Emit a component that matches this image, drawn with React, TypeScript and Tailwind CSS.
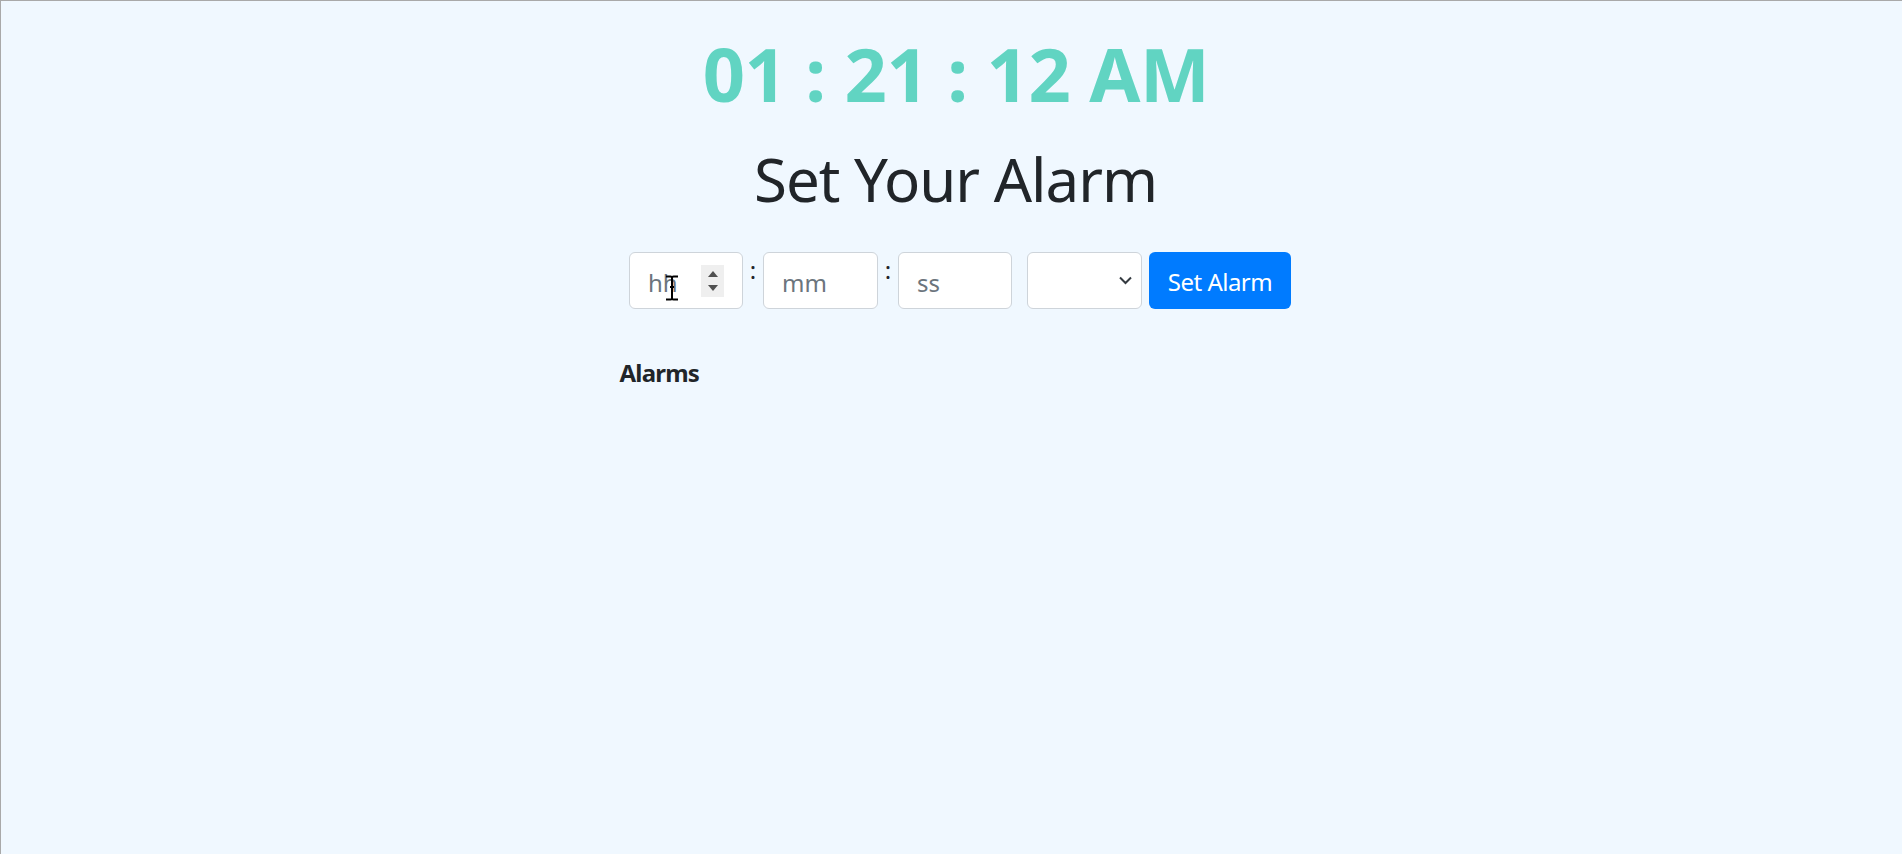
import React from "react";

function Colon() {
  return (
    <span className="w-[20px] self-start text-center text-[24px] leading-[36px] text-[#212529]">:</span>
  );
}

const inputCls =
  "h-[57px] rounded-[6px] border border-[#ced4da] bg-white px-[18px] pt-[4px] text-[24px] leading-[36px] placeholder:text-[#6c757d] outline-none";

export default function App() {
  const font = { fontFamily: '"Noto Sans", "Open Sans", sans-serif' };
  return (
    <div
      className="min-h-screen w-full bg-[#f0f8ff] border-t border-l border-[#a9a9a9] text-[#212529]"
      style={font}
    >
      <div className="pt-[29px] pl-[9px] text-center text-[74px] font-bold leading-[1.2] text-[#61d4c2] tracking-[-0.4px]">
        01 : 21 : 12 AM
      </div>
      <h1 className="mt-[24px] pl-[8px] text-center text-[60px] font-normal leading-[1.2] tracking-[-1px] text-[#212529]">
        Set Your Alarm
      </h1>
      <div className="mt-[37px] flex justify-center pl-[17px]">
        <div className="relative h-[57px] w-[114px]">
          <input type="text" placeholder="hh" className={`${inputCls} w-[114px]`} style={font} />
          <div className="absolute left-[72px] top-[13px] flex h-[32px] w-[23px] flex-col items-center justify-center gap-[8px] bg-[#efefef]">
            <svg width="10" height="6" viewBox="0 0 10 6"><path d="M5 0 L10 6 L0 6 Z" fill="#505050" /></svg>
            <svg width="10" height="6" viewBox="0 0 10 6"><path d="M0 0 L10 0 L5 6 Z" fill="#505050" /></svg>
          </div>
          <svg className="absolute left-[36px] top-[23px]" width="14" height="26" viewBox="0 0 14 26">
            <path d="M1 1.5 H5.5 M8.5 1.5 H13 M7 2 V24 M1 24.5 H5.5 M8.5 24.5 H13 M5.5 1.5 Q7 1.5 7 3 M8.5 1.5 Q7 1.5 7 3 M5.5 24.5 Q7 24.5 7 23 M8.5 24.5 Q7 24.5 7 23 M5 12 H9" stroke="#000" strokeWidth="2" fill="none" />
          </svg>
        </div>
        <Colon />
        <input type="text" placeholder="mm" className={`${inputCls} w-[115px]`} style={font} />
        <Colon />
        <input type="text" placeholder="ss" className={`${inputCls} w-[114px]`} style={font} />
        <div className="ml-[15px] relative h-[57px] w-[115px] rounded-[6px] border border-[#ced4da] bg-white">
          <svg className="absolute right-[9px] top-[23px]" width="13" height="9" viewBox="0 0 13 9">
            <path d="M1 1.5 L6.5 7 L12 1.5" stroke="#343a40" strokeWidth="2" fill="none" />
          </svg>
        </div>
        <button
          className="ml-[7px] h-[57px] w-[142px] rounded-[6px] bg-[#007bff] pt-[3px] text-center text-[24px] leading-[36px] text-white tracking-[-0.5px]"
          style={font}
        >
          Set Alarm
        </button>
      </div>
      <div className="mx-auto mt-[46px] w-[664px]">
        <h5 className="text-[24px] font-bold leading-[36px] text-[#212529] tracking-[-0.8px]">Alarms</h5>
      </div>
    </div>
  );
}
